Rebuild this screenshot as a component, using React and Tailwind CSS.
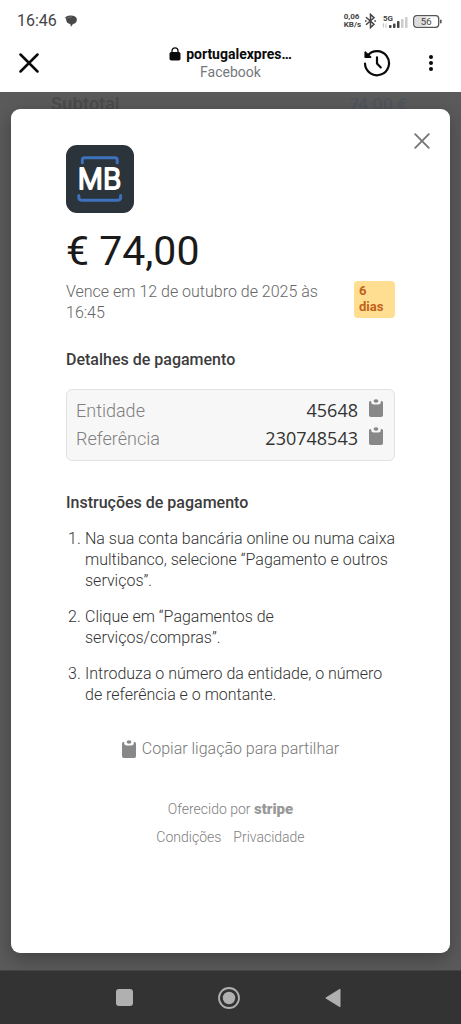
function Clipboard({ className = '' }) {
  return (
    <svg viewBox="0 0 14 18" className={`h-[18px] w-[14px] shrink-0 fill-[#888] ${className}`} aria-hidden="true">
      <path d="M0 3.6Q0 2 1.4 2H2.2V3.6Q2.2 5.4 4.2 5.4H9.8Q11.8 5.4 11.8 3.6V2H12.6Q14 2 14 3.6V16.2Q14 18 12.2 18H1.8Q0 18 0 16.2Z" />
      <ellipse cx="7" cy="2" rx="2.4" ry="1.8" />
    </svg>
  );
}

function StatusBar() {
  return (
    <div className="flex h-[42px] items-center justify-between pr-[19px] pl-[17px] text-[#444]">
      <div className="flex items-center gap-[8px]">
        <span className="text-[16px] leading-5">16:46</span>
        <svg viewBox="0 0 12 12" className="h-3 w-3" aria-hidden="true">
          <path d="M0 2.6Q2.2 .2 5.6 .4Q11.9 .6 11.9 4.8Q11.8 8.4 8 9L6 11.8L5.2 9Q1.5 8.6 1.2 5Q1.2 3.6 0 2.6Z" fill="#484848" />
          <path d="M2 3.4Q3.6 1.8 7 2" stroke="#888" strokeWidth=".6" fill="none" />
        </svg>
      </div>
      <div className="flex items-center gap-1">
        <div className="text-[8px] leading-[8px] font-bold">
          <div>0,06</div>
          <div>KB/s</div>
        </div>
        <svg viewBox="0 0 11 16" className="h-4 w-[11px]" fill="none" stroke="#444" strokeWidth="1.5" aria-hidden="true">
          <path d="M1 4.2 9 11.2 5.5 14.6V1.4L9 4.8 1 11.8" />
          <path d="M0 8H1.6M9.4 8H11" />
        </svg>
        <svg viewBox="0 0 26 15" className="ml-[2px] h-[15px] w-[26px]" aria-hidden="true">
          <text x="1" y="6.5" fontFamily="Roboto, sans-serif" fontSize="8" fontWeight="700" fill="#444">5G</text>
          <path d="M1.5 13.5V9.5M.5 10.5 1.5 9.5M3.8 9.5V13.5L4.8 12.5" stroke="#bbb" strokeWidth=".8" fill="none" />
          <g fill="#444">
            <rect x="7" y="11" width="2.5" height="3" rx=".8" />
            <rect x="11" y="9.5" width="2.5" height="4.5" rx=".8" />
            <rect x="15" y="7" width="2.5" height="7" rx=".8" />
          </g>
          <g fill="#ccc">
            <rect x="19" y="5" width="2.5" height="9" rx=".8" />
            <rect x="23" y="3" width="2.5" height="11" rx=".8" />
          </g>
        </svg>
        <svg viewBox="0 0 29 13" className="ml-[1px] h-[13px] w-[29px]" aria-hidden="true">
          <rect x="2" y="2" width="12" height="9" rx="1.5" fill="#ddd" />
          <rect x=".7" y=".7" width="25" height="11.6" rx="3" fill="none" stroke="#555" strokeWidth="1.3" />
          <rect x="27" y="4.5" width="1.6" height="4" rx=".8" fill="#555" />
          <text x="13.2" y="10" textAnchor="middle" fontFamily="Roboto, sans-serif" fontSize="9.5" fontWeight="400" fill="#444">56</text>
        </svg>
      </div>
    </div>
  );
}

function BrowserBar() {
  return (
    <header className="grid h-[50px] grid-cols-[1fr_auto_1fr] items-center px-[18px] pb-2">
      <button type="button" aria-label="Fechar" className="flex h-[22px] w-[22px] items-center justify-center">
        <svg viewBox="0 0 20 20" className="h-5 w-5" stroke="#0a0a0a" strokeWidth="2.5" strokeLinecap="round" aria-hidden="true">
          <path d="M1.5 1.5 18.5 18.5M18.5 1.5 1.5 18.5" />
        </svg>
      </button>
      <div className="text-center">
        <div className="flex items-center justify-center gap-[5px]">
          <svg viewBox="0 0 12 14" className="h-[14px] w-3" aria-hidden="true">
            <rect x=".5" y="5" width="11" height="8.5" rx="1.8" fill="#0a0a0a" />
            <path d="M3 6V3.8A3 3 0 0 1 9 3.8V6" fill="none" stroke="#0a0a0a" strokeWidth="1.3" />
          </svg>
          <span className="text-[14px] leading-[18px] font-bold text-[#0a0a0a]">portugalexpres…</span>
        </div>
        <div className="text-[14px] leading-[18px] text-[#75787c]">Facebook</div>
      </div>
      <div className="flex items-center justify-end gap-7">
        <button type="button" aria-label="Histórico">
          <svg viewBox="0 0 28 28" className="h-7 w-7" fill="none" stroke="#0a0a0a" strokeWidth="2.2" strokeLinecap="round" strokeLinejoin="round" aria-hidden="true">
            <path d="M2 14.5A12 12 0 1 0 4.4 7" />
            <path d="M2.2 3.2V8.2H7.6Z" fill="#0a0a0a" strokeWidth="1.6" />
            <path d="M14 8.4V14.5L17.8 18.4" />
          </svg>
        </button>
        <button type="button" aria-label="Mais opções" className="flex w-6 justify-center">
          <svg viewBox="0 0 4 16" className="h-4 w-1" fill="#0a0a0a" aria-hidden="true">
            <circle cx="2" cy="2" r="2" />
            <circle cx="2" cy="8" r="2" />
            <circle cx="2" cy="14" r="2" />
          </svg>
        </button>
      </div>
    </header>
  );
}

function MultibancoLogo() {
  return (
    <svg viewBox="0 0 68 68" className="h-[68px] w-[68px]" role="img" aria-label="Multibanco">
      <rect width="68" height="68" rx="11" fill="#2b333b" />
      <g fill="none" stroke="#3f72bd" strokeWidth="3" strokeLinecap="round">
        <path d="M16.3 17.8V15Q16.3 12.8 18.5 12.8H49Q51.2 12.8 51.2 15V17.8" />
        <path d="M12.8 50.6V52.6Q12.8 55.2 15.4 55.2H52Q54.6 55.2 54.6 52.6V50.6" />
      </g>
      <text x="33.4" y="44.2" textAnchor="middle" fontFamily="Inter, sans-serif" fontSize="28" fontWeight="300" fill="#fff" stroke="#fff" strokeWidth="1.9" strokeLinejoin="round">MB</text>
    </svg>
  );
}

const details = [
  ['Entidade', '45648'],
  ['Referência', '230748543'],
];

const steps = [
  'Na sua conta bancária online ou numa caixa multibanco, selecione “Pagamento e outros serviços”.',
  'Clique em “Pagamentos de serviços/compras”.',
  'Introduza o número da entidade, o número de referência e o montante.',
];

function PaymentDialog() {
  return (
    <section role="dialog" aria-label="Pagamento Multibanco" className="mx-[11px] mb-[17px] flex-1 rounded-[9px] bg-white pb-6 shadow-[0_6px_20px_rgba(0,0,0,0.3)]">
      <div className="flex items-start justify-between pr-5 pl-[55px]">
        <div className="pt-9">
          <MultibancoLogo />
        </div>
        <button type="button" aria-label="Fechar" className="mt-6">
          <svg viewBox="0 0 16 16" className="h-4 w-4" stroke="#777" strokeWidth="1.9" strokeLinecap="round" aria-hidden="true">
            <path d="M1.2 1.2 14.8 14.8M14.8 1.2 1.2 14.8" />
          </svg>
        </button>
      </div>
      <div className="px-[55px]">
        <h1 className="mt-[14px] text-[41px] leading-[48px] text-[#1a1a1a]">€ 74,00</h1>
        <div className="mt-[6px] flex items-start justify-between">
          <p className="w-[264px] text-[16px] leading-[21px] font-light text-[#666]">
            Vence em 12 de outubro de 2025 às 16:45
          </p>
          <span className="w-[41px] rounded-[4px] bg-[#ffde92] px-[5px] pt-[2px] pb-[3px] text-[13px] leading-4 font-bold text-[#c0621a]">6 dias</span>
        </div>
        <h2 className="mt-[26px] text-[16px] leading-[21px] font-medium text-[#3c3c3c]">Detalhes de pagamento</h2>
        <dl className="mt-[19px] rounded-[6px] border border-[#e2e2e2] bg-[#f7f7f7] px-[9px] pt-[6px] pb-2">
          {details.map(([label, value]) => (
            <div key={label} className="flex h-7 items-center justify-between">
              <dt className="text-[18px] font-light text-[#808080]">{label}</dt>
              <dd className="flex items-center gap-[11px] pr-[2px] font-['Open_Sans',sans-serif] text-[18px] text-[#333]">
                {value}
                <button type="button" aria-label={`Copiar ${label}`} className="pb-1">
                  <Clipboard />
                </button>
              </dd>
            </div>
          ))}
        </dl>
        <h2 className="mt-[31px] text-[16px] leading-[21px] font-medium text-[#3c3c3c]">Instruções de pagamento</h2>
        <ol className="mt-[15px] flex flex-col gap-[15px] text-[16px] leading-[21px] font-light text-[#333]">
          {steps.map((step, i) => (
            <li key={step} className="flex">
              <span className="w-[19px] shrink-0 pl-[2px]">{i + 1}.</span>
              <span>{step}</span>
            </li>
          ))}
        </ol>
        <div className="mt-[33px] flex justify-center">
          <button type="button" className="flex items-center gap-[6px] text-[16px] leading-[21px] font-light text-[#777]">
            <Clipboard />
            Copiar ligação para partilhar
          </button>
        </div>
        <footer className="mt-[36px] text-center text-[14px] leading-7 font-light text-[#808080]">
          <p>
            Oferecido por <span className="text-[15px] font-black text-[#999]">stripe</span>
          </p>
          <nav className="flex justify-center gap-3">
            <a href="#condicoes">Condições</a>
            <a href="#privacidade">Privacidade</a>
          </nav>
        </footer>
      </div>
    </section>
  );
}

function SystemNav() {
  return (
    <nav aria-label="Sistema" className="flex h-[54px] items-center justify-center gap-[62px] border-t border-[#444] bg-[#333] pr-1">
      <button type="button" aria-label="Recentes" className="flex w-[42px] justify-center">
        <span className="h-[17px] w-[17px] rounded-[3px] bg-[#b0b0b0]" />
      </button>
      <button type="button" aria-label="Início" className="flex w-[42px] justify-center">
        <svg viewBox="0 0 22 22" className="h-[22px] w-[22px]" aria-hidden="true">
          <circle cx="11" cy="11" r="10" fill="none" stroke="#b0b0b0" strokeWidth="1.8" />
          <circle cx="11" cy="11" r="6.2" fill="#b0b0b0" />
        </svg>
      </button>
      <button type="button" aria-label="Voltar" className="flex w-[42px] justify-center">
        <svg viewBox="0 0 16 20" className="h-5 w-4" aria-hidden="true">
          <path d="M15 1.2V18.8L.8 10Z" fill="#b0b0b0" stroke="#b0b0b0" strokeLinejoin="round" />
        </svg>
      </button>
    </nav>
  );
}

export default function App() {
  return (
    <div className="flex min-h-screen flex-col bg-white font-[Roboto,sans-serif]">
      <StatusBar />
      <BrowserBar />
      <main className="flex flex-1 flex-col bg-[#5b5b5b]">
        <div className="flex h-[17px] justify-between overflow-hidden pt-[2px] pr-[53px] pl-[51px] font-[Inter,sans-serif] leading-5">
          <span className="text-[17px] font-semibold text-[#4b4b4b]">Subtotal</span>
          <span className="text-[16px] font-medium text-[#50545f]">74,00 €</span>
        </div>
        <PaymentDialog />
      </main>
      <SystemNav />
    </div>
  );
}
